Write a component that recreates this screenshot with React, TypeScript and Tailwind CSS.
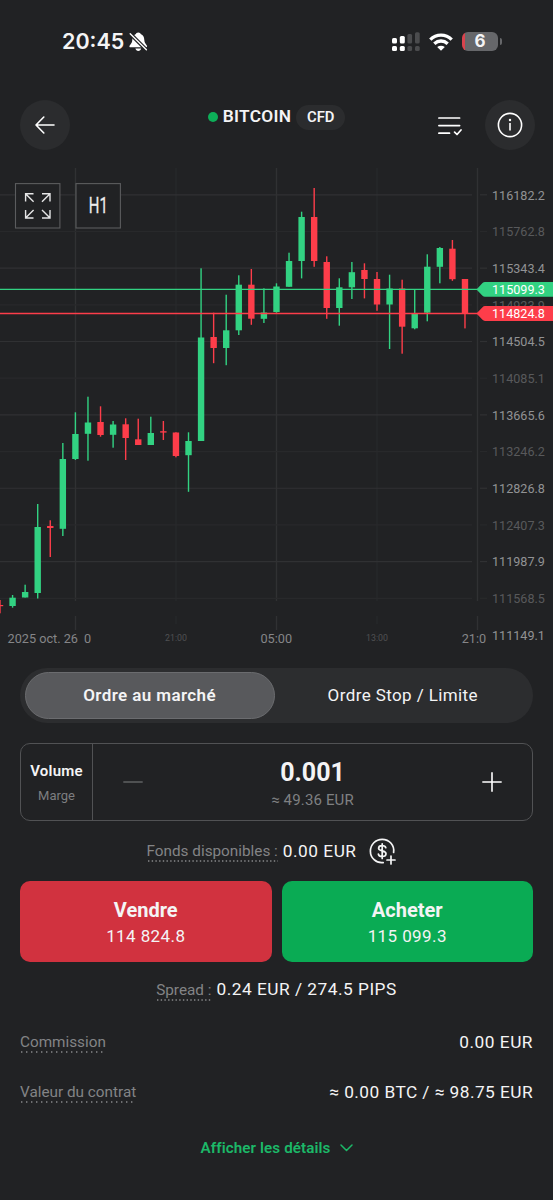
import React, { useState } from "react";

type Candle = {
    up: boolean;
    high: number;
    top: number;
    bottom: number;
    low: number;
};

const c = (
    dir: "u" | "d",
    high: number,
    top: number,
    bottom: number,
    low: number
): Candle => ({ up: dir === "u", high, top, bottom, low });

const CANDLES: Candle[] = [
    c("d", 600, 605, 606.2, 613.3),
    c("u", 595, 597.7, 606, 607.7),
    c("u", 584.7, 592, 597.5, 597.5),
    c("u", 504, 527, 593, 598.5),
    c("d", 520.3, 526, 528, 557),
    c("u", 443, 459, 528.8, 536),
    c("u", 412.3, 434, 459, 460),
    c("u", 396.7, 422.5, 433.8, 460.7),
    c("d", 406.3, 422, 435, 436.7),
    c("u", 421, 424.5, 434.8, 447.7),
    c("d", 418.3, 424.3, 438, 460),
    c("d", 418.7, 439.3, 445, 445),
    c("u", 416.7, 433, 445, 445),
    c("d", 421, 431.2, 432.6, 440),
    c("d", 432.3, 432.5, 456, 457.3),
    c("u", 432.3, 441, 455.2, 491.8),
    c("u", 268.3, 337.5, 441, 441),
    c("d", 312.7, 337, 348, 363.2),
    c("u", 294.7, 330.3, 348, 365.2),
    c("u", 275.3, 284.7, 330.3, 335),
    c("d", 269, 284.7, 318.7, 324.8),
    c("u", 288.3, 312.5, 318.8, 323),
    c("u", 283.3, 286.5, 312, 312.8),
    c("u", 252.7, 261, 286.8, 286.8),
    c("u", 211.7, 217, 261, 278.4),
    c("d", 188, 217, 261, 266.8),
    c("d", 256.3, 262, 308, 318.8),
    c("u", 278.3, 287.3, 308, 325.7),
    c("u", 262, 272.2, 287.3, 299),
    c("d", 263.3, 270, 279, 298.4),
    c("d", 272, 279, 304.5, 310.8),
    c("u", 274.7, 288.5, 304.5, 349),
    c("d", 279.7, 288.5, 326.7, 353.7),
    c("u", 289.7, 313.7, 328.3, 329.3),
    c("u", 254.3, 266.7, 312.7, 321.3),
    c("u", 247, 248, 266.8, 283.3),
    c("d", 240, 248.7, 279.2, 280.8),
    c("d", 279, 279, 313.5, 328.4),
];

const PRICES = [
    "116182.2",
    "115762.8",
    "115343.4",
    "114923.9",
    "114504.5",
    "114085.1",
    "113665.6",
    "113246.2",
    "112826.8",
    "112407.3",
    "111987.9",
    "111568.5",
    "111149.1",
];

const CANDLE_STEP = 12.567;
const PRICE_TOP = 194.8;
const PRICE_STEP = 36.68;
const COLUMNS = [75.5, 176, 276.5, 377, 477.5];

const GREEN = "#32d282";
const RED = "#fd3d4a";

function PriceTag({ y, color, label }: { y: number; color: string; label: string }) {
    return (
        <g>
            <line x1="0" x2="480" y1={y} y2={y} stroke={color} strokeWidth="1.4" />
            <path
                d={`M476.5 ${y} L482.5 ${y - 6.3} Q483.5 ${y - 7.4} 485 ${y - 7.4} H553 V${y + 7.4} H485 Q483.5 ${y + 7.4} 482.5 ${y + 6.3} Z`}
                fill={color}
            />
            <text x="492" y={y + 4.6} fontSize="12.6" fill="#fff">
                {label}
            </text>
        </g>
    );
}

function Chart() {
    return (
        <svg
            viewBox="0 166 553 490"
            className="block w-full h-[490px] font-[Roboto,sans-serif]"
        >
            {/* grid */}
            {COLUMNS.map((x, i) => {
                const major = i % 2 === 0;
                return (
                    <g key={x} stroke={major ? "#303133" : "#292a2c"} strokeWidth={major ? 1.4 : 1}>
                        <line x1={x} x2={x} y1="168" y2="601" />
                        <line x1={x} x2={x} y1="616" y2={major ? 630 : 624} />
                    </g>
                );
            })}
            {PRICES.slice(0, 12).map((price, i) => {
                const y = PRICE_TOP + i * PRICE_STEP;
                return (
                    <g key={price} stroke={i % 2 === 0 ? "#303133" : "#28292b"} strokeWidth="1.2">
                        <line x1="0" x2="472" y1={y} y2={y} />
                        <line x1="480" x2="487" y1={y} y2={y} />
                    </g>
                );
            })}

            {/* axis labels */}
            {PRICES.map((price, i) => (
                <text
                    key={price}
                    x="492"
                    y={PRICE_TOP + i * PRICE_STEP + 4.8}
                    fontSize="12.6"
                    fill={i % 2 === 0 ? "#919294" : "#58595b"}
                >
                    {price}
                </text>
            ))}
            <g fontSize="12.7" fill="#858688">
                <text x="7.5" y="643.2">2025 oct. 26</text>
                <text x="84" y="643.2">0</text>
                <text x="276.3" y="643.2" textAnchor="middle">05:00</text>
                <text x="461.7" y="643.2">21:0</text>
            </g>
            <g fontSize="8.8" fill="#505153" textAnchor="middle">
                <text x="176" y="641">21:00</text>
                <text x="377" y="641">13:00</text>
            </g>

            {/* candles */}
            {CANDLES.map((candle, i) => {
                const x = i * CANDLE_STEP;
                return (
                    <g key={i} fill={candle.up ? GREEN : RED}>
                        <rect
                            x={x - 0.7}
                            y={candle.high}
                            width="1.4"
                            height={candle.low - candle.high}
                        />
                        <rect
                            x={x - 3.2}
                            y={candle.top}
                            width="6.4"
                            height={candle.bottom - candle.top}
                        />
                    </g>
                );
            })}

            <PriceTag y={289.4} color={GREEN} label="115099.3" />
            <PriceTag y={313.5} color={RED} label="114824.8" />

            {/* chart controls */}
            <g fill="#212224" stroke="#5b5c5e" strokeWidth="1.1">
                <rect x="15.5" y="183.6" width="44.4" height="44.4" />
                <rect x="76" y="183.6" width="44.4" height="44.4" />
            </g>
            <g fill="none" stroke="#e6e6e7" strokeWidth="1.4">
                <path d="M25.6 201.5V193.7H33.5M25.8 193.9L33.6 201.7" />
                <path d="M42 193.7H50V201.5M49.8 193.9L42 201.7" />
                <path d="M25.6 210V218H33.5M25.8 217.8L33.6 210" />
                <path d="M42 218H50V210M49.8 217.8L42 210" />
            </g>
            <text
                x="88.8"
                y="213.4"
                fontSize="21.5"
                fill="#ececed"
                stroke="#ececed"
                strokeWidth="0.3"
                textLength="19"
                lengthAdjust="spacingAndGlyphs"
            >
                H1
            </text>
        </svg>
    );
}

function StatusBar() {
    return (
        <div className="h-[83px] flex items-center justify-between pl-[62px] pr-[51px]">
            <div className="flex items-center gap-[5px]">
                <span className="font-[Inter,sans-serif] font-semibold text-[21.5px] leading-none">
                    20:45
                </span>
                <svg width="19" height="20" viewBox="0 0 19 20">
                    <path
                        d="M9.3 0.4C7.9 0.4 7 1.2 6.9 2.1C4.3 3 3.4 5.2 3.3 8C3.2 11 1.6 12 0.7 13.4C0 14.6 0.5 15.2 1.5 15.2H16.8C18 15.2 18.5 14.6 17.8 13.4C17 12 15.4 11 15.3 8C15.2 5.2 14.2 3 11.7 2.1C11.6 1.2 10.7 0.4 9.3 0.4Z"
                        fill="#fff"
                    />
                    <path d="M6.4 16.5H12.2C11.8 18 10.7 19 9.3 19C7.9 19 6.8 18 6.4 16.5Z" fill="#fff" />
                    <path d="M0.5 1L17.5 18" stroke="#212224" strokeWidth="3.8" />
                    <path d="M1.2 1.7L17.4 17.8" stroke="#fff" strokeWidth="1.4" strokeLinecap="round" />
                </svg>
            </div>
            <div className="flex items-center">
                <svg width="28" height="20" viewBox="0 0 28 20">
                    <g fill="#fff">
                        <rect x="0" y="6" width="5" height="5.6" rx="1.5" />
                        <rect x="7.8" y="4" width="5" height="7.6" rx="1.5" />
                        <rect x="0" y="14" width="5" height="5" rx="1.5" />
                        <rect x="7.8" y="14" width="5" height="5" rx="1.5" />
                    </g>
                    <g fill="#4b4c4e">
                        <rect x="15.4" y="2" width="4.7" height="9.6" rx="1.5" />
                        <rect x="23" y="0.2" width="4.7" height="11.4" rx="1.5" />
                        <rect x="15.4" y="14" width="4.7" height="5" rx="1.5" />
                        <rect x="23" y="14" width="4.7" height="5" rx="1.5" />
                    </g>
                </svg>
                <svg width="24" height="18" viewBox="0 0 24 18" className="ml-[9px]">
                    <g fill="none" stroke="#fff" strokeWidth="3.3">
                        <path d="M1.3 6.6C7.3 0.6 16.7 0.6 22.7 6.6" />
                        <path d="M5.3 10.7C9.2 7.1 14.8 7.1 18.7 10.7" />
                    </g>
                    <path d="M8.2 13.9C10.4 12.2 13.6 12.2 15.8 13.9L12 17.7Z" fill="#fff" />
                </svg>
                <div className="ml-[9px] w-9 h-[19px] rounded-md bg-[linear-gradient(90deg,#d9434d_0_3.5px,#66676a_3.5px)] flex items-center justify-center font-[Inter,sans-serif] font-bold text-[17px] leading-none">
                    6
                </div>
                <div className="ml-[1.5px] w-[2.5px] h-[7px] rounded-r-full bg-[#66676a]" />
            </div>
        </div>
    );
}

function Header() {
    return (
        <header className="h-[83px] pl-5 pr-[18px] pt-[17.4px] flex items-start justify-between">
            <button className="w-[50px] h-[50px] rounded-full bg-[#2b2c2e] flex items-center justify-center">
                <svg width="20" height="18" viewBox="0 0 20 18" fill="none" stroke="#fff" strokeWidth="1.6" strokeLinecap="round" strokeLinejoin="round">
                    <path d="M19 9H1M8.8 1L1 9L8.8 17" />
                </svg>
            </button>
            <div className="flex items-center mt-[4px] ml-[45px]">
                <span className="w-[10px] h-[10px] rounded-full bg-[#0dae58]" />
                <span className="ml-[5px] font-semibold text-[17.3px] tracking-[0.3px]">BITCOIN</span>
                <span className="ml-[5px] w-[49px] h-[25px] rounded-full bg-[#2b2c2e] flex items-center justify-center font-semibold text-[14.8px]">
                    CFD
                </span>
            </div>
            <div className="flex items-center gap-[23px]">
                <svg width="24" height="20" viewBox="0 0 24 20" fill="none" stroke="#fff" strokeWidth="1.7" strokeLinecap="round" className="mt-px">
                    <path d="M0.9 2H21.6M0.9 9.6H21.6M0.9 17.2H11.5" />
                    <path d="M16.6 16.2L19 18.5L23 14" strokeLinejoin="round" />
                </svg>
                <button className="w-[50px] h-[50px] rounded-full bg-[#2b2c2e] flex items-center justify-center">
                    <svg width="26" height="26" viewBox="0 0 26 26" fill="none" stroke="#fff" strokeWidth="1.6">
                        <circle cx="13" cy="13" r="11.6" />
                        <path d="M13 11V18.5" />
                        <circle cx="13" cy="8" r="1.2" fill="#fff" stroke="none" />
                    </svg>
                </button>
            </div>
        </header>
    );
}

// Hint label with a row of dots under it
function DottedLabel({ children, step = 5 }: { children: string; step?: number }) {
    return (
        <span className="mt-px inline-flex flex-col text-[15.3px] leading-[18px] text-[#838486]">
            <span>{children}</span>
            <svg className="w-0 min-w-full h-[2px]">
                <line
                    x1="1"
                    x2="100%"
                    y1="1"
                    y2="1"
                    stroke="#88898b"
                    strokeWidth="1.4"
                    strokeDasharray={`1.4 ${step - 1.4}`}
                />
            </svg>
        </span>
    );
}

function TradeButton({ title, price, className }: { title: string; price: string; className: string }) {
    return (
        <button className={`flex-1 h-[81px] rounded-[10px] flex flex-col items-center ${className}`}>
            <span className="mt-[17px] text-[20px] leading-6 font-bold">{title}</span>
            <span className="mt-[2px] text-[17px] leading-6 tracking-[0.4px]">{price}</span>
        </button>
    );
}

export default function App() {
    const [orderType, setOrderType] = useState("market"); // Selected order tab

    const tabClass = (active: boolean) =>
        active
            ? "w-[250px] rounded-full bg-[#58595c] border border-[#6b6c6f] font-semibold"
            : "flex-1 rounded-full";

    return (
        <main className="w-[553px] h-[1200px] overflow-hidden bg-[#212224] text-[#f4f4f5] font-[Roboto,sans-serif] flex flex-col">
            <StatusBar />
            <Header />
            <Chart />

            <section className="px-5 pt-[12.4px] flex flex-col">
                <div className="h-[55px] rounded-full bg-[#2c2d2f] py-1 pl-[4.6px] pr-0.5 flex text-[17px] tracking-[0.4px]">
                    <button className={tabClass(orderType === "market")} onClick={() => setOrderType("market")}>
                        Ordre au marché
                    </button>
                    <button className={tabClass(orderType === "stop")} onClick={() => setOrderType("stop")}>
                        Ordre Stop / Limite
                    </button>
                </div>

                <div className="mt-5 h-[78px] rounded-[10px] border border-[#515254] flex">
                    <div className="w-[72px] border-r border-[#515254] flex flex-col items-center">
                        <span className="mt-[17px] text-[15px] leading-5 font-semibold tracking-[0.2px]">Volume</span>
                        <span className="mt-[5px] text-[13px] leading-5 text-[#7d7e80]">Marge</span>
                    </div>
                    <div className="flex-1 flex items-center justify-between pl-[30px] pr-[30px]">
                        <svg width="20" height="20" viewBox="0 0 20 20" stroke="#5c5d5f" strokeWidth="1.6">
                            <path d="M0.3 10H19.7" />
                        </svg>
                        <div className="flex flex-col items-center pt-[5px]">
                            <span className="text-[25px] leading-7 font-bold">0.001</span>
                            <span className="mt-[3px] text-[15px] leading-5 tracking-[0.15px] text-[#7f8082]">≈ 49.36 EUR</span>
                        </div>
                        <svg width="20" height="20" viewBox="0 0 20 20" stroke="#fff" strokeWidth="1.6">
                            <path d="M0.3 10H19.7M10 0.3V19.7" />
                        </svg>
                    </div>
                </div>

                <div className="h-[60px] pt-px pr-[11px] flex items-center justify-center">
                    <DottedLabel step={3.7}>Fonds disponibles :</DottedLabel>
                    <span className="ml-[5px] text-[17.3px] tracking-[0.5px]">0.00 EUR</span>
                    <svg width="27" height="27" viewBox="0 0 27 27" fill="none" stroke="#f4f4f5" strokeWidth="1.7" strokeLinecap="round" className="ml-3">
                        <path d="M14.2 24.6C7 25.5 1.4 19.8 1.4 13.2C1.4 6.6 6.6 1.3 13.2 1.3C20.5 1.3 25.7 7.5 24.6 14.5" />
                        <path d="M16.8 9.7C16.4 8.4 15 7.7 13.2 7.7C11.1 7.7 9.6 8.6 9.6 10.3C9.6 14 17 11.8 17 15.8C17 17.6 15.3 18.5 13.2 18.5C11.2 18.5 9.7 17.6 9.4 16.2M13.2 5.8V20.4" />
                        <path d="M22 18V26M18 22H26" />
                    </svg>
                </div>

                <div className="flex gap-[10px]">
                    <TradeButton title="Vendre" price="114 824.8" className="bg-[#d1323f]" />
                    <TradeButton title="Acheter" price="115 099.3" className="bg-[#0aab54]" />
                </div>

                <div className="h-[55px] pt-px flex items-center justify-center">
                    <DottedLabel step={3.7}>Spread :</DottedLabel>
                    <span className="ml-[5px] text-[17.3px] tracking-[0.5px]">0.24 EUR / 274.5 PIPS</span>
                </div>

                <div className="h-[50px] pt-px flex items-center justify-between">
                    <DottedLabel>Commission</DottedLabel>
                    <span className="text-[17.3px] tracking-[0.5px]">0.00 EUR</span>
                </div>
                <div className="h-[50px] pt-px flex items-center justify-between">
                    <DottedLabel>Valeur du contrat</DottedLabel>
                    <span className="text-[17.3px] tracking-[0.45px]">≈ 0.00 BTC / ≈ 98.75 EUR</span>
                </div>

                <button className="h-[60px] pt-0.5 flex items-center justify-center gap-[9px] text-[15.2px] tracking-[0.1px] font-semibold text-[#1cb868]">
                    Afficher les détails
                    <svg width="13" height="8" viewBox="0 0 13 8" fill="none" stroke="currentColor" strokeWidth="1.5" strokeLinecap="round" strokeLinejoin="round">
                        <path d="M1 1L6.5 6.5L12 1" />
                    </svg>
                </button>
            </section>
        </main>
    );
}
